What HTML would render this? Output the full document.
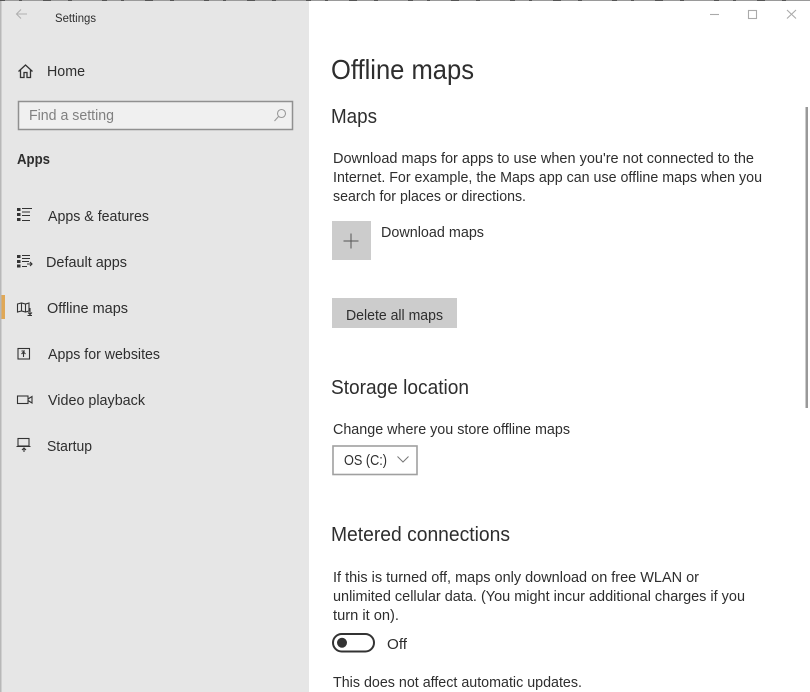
<!DOCTYPE html>
<html lang="en">
<head>
<meta charset="utf-8">
<title>Settings - Offline maps</title>
<style>
html,body{margin:0;padding:0;width:810px;height:692px;overflow:hidden;background:#fff}
svg{display:block;filter:blur(0.35px)}
text{font-family:"Liberation Sans",sans-serif;fill:#2e2e2e}
.i{fill:none;stroke:#333;stroke-width:1.1}
</style>
</head>
<body>
<svg width="810" height="692" viewBox="0 0 810 692" xmlns="http://www.w3.org/2000/svg">
<rect width="810" height="692" fill="#fff"/>
<rect width="309" height="692" fill="#e6e6e6"/>
<rect x="0" y="0" width="1.500" height="692" fill="#b8b8b8"/>
<rect x="0" y="0" width="810" height="1" fill="#9a9a9a"/>
<line x1="0" y1="0.500" x2="810" y2="0.500" stroke="#555" stroke-width="1" stroke-dasharray="5 14 3 21 8 17 4 30"/>

<!-- title bar -->
<path class="i" d="M27 14H16.500M21 9.500L16.500 14L21 18.500" style="stroke:#b0b0b0"/>
<text x="55" y="22" font-size="11.500" textLength="41" lengthAdjust="spacingAndGlyphs">Settings</text>
<path class="i" d="M710 14.500H719" style="stroke:#aaa"/>
<rect x="748.500" y="10.500" width="8" height="8" class="i" style="stroke:#aaa"/>
<path class="i" d="M787 10L796 18.500M796 10L787 18.500" style="stroke:#aaa"/>

<!-- home -->
<path class="i" d="M18.500 71.500L25.500 65L32.500 71.500M20.500 70V77.500H24V72.500H27V77.500H30.500V70" style="stroke-width:1.300"/>
<text x="47" y="76" font-size="15" textLength="38" lengthAdjust="spacingAndGlyphs">Home</text>

<!-- search -->
<rect x="18.500" y="101.500" width="274" height="28" fill="#f0f0f0" stroke="#909090" stroke-width="1.500"/>
<text x="29" y="120" font-size="15" style="fill:#808080" textLength="85" lengthAdjust="spacingAndGlyphs">Find a setting</text>
<circle cx="281.500" cy="113.500" r="4" class="i" style="stroke:#999"/>
<path class="i" d="M278.500 116.500L274.500 121" style="stroke:#999"/>

<text x="17" y="164" font-size="15" font-weight="700" textLength="33" lengthAdjust="spacingAndGlyphs">Apps</text>

<!-- Apps & features -->
<path d="M17 208h3.500v3h-3.500zM17 213h3.500v3h-3.500zM17 218h3.500v3h-3.500z" fill="#333"/>
<path class="i" d="M22 208.500H32M22 212H30M22 215.500H30M22 220.500H30"/>
<text x="48" y="221" font-size="15" textLength="101" lengthAdjust="spacingAndGlyphs">Apps &amp; features</text>

<!-- Default apps -->
<path d="M17 255h3.500v3h-3.500zM17 260h3.500v3h-3.500zM17 264.500h3.500v3h-3.500z" fill="#333"/>
<path class="i" d="M22 255.500H30M22 258.500H30M22 261.500H29M22 266.500H27M27 264H32M30 262L32 264L30 266"/>
<text x="46" y="267" font-size="15" textLength="81" lengthAdjust="spacingAndGlyphs">Default apps</text>

<!-- Offline maps -->
<rect x="1.500" y="295" width="3.500" height="24" fill="#e0a857"/>
<path class="i" d="M17.500 304L21.500 303L25.500 304L29 303V311L25.500 312L21.500 311L17.500 312ZM21.500 303V311M25.500 304V312M30 308V314M28 312.500L30 314.500L32 312.500M27.500 315.500H32"/>
<text x="47" y="313" font-size="15" textLength="81" lengthAdjust="spacingAndGlyphs">Offline maps</text>

<!-- Apps for websites -->
<rect x="18" y="348.500" width="11.500" height="10.500" class="i"/>
<path class="i" d="M23.500 357V352M21.500 354L23.500 352L25.500 354M21.500 351H25"/>
<text x="48" y="359" font-size="15" textLength="112" lengthAdjust="spacingAndGlyphs">Apps for websites</text>

<!-- Video playback -->
<rect x="17.500" y="396" width="10.500" height="7.500" class="i"/>
<path class="i" d="M28 399L32 396.500V403L28 400.500"/>
<text x="48" y="405" font-size="15" textLength="97" lengthAdjust="spacingAndGlyphs">Video playback</text>

<!-- Startup -->
<rect x="18" y="438.500" width="11" height="7.500" class="i"/>
<path class="i" d="M16.500 446.500H30.500M24 452V448M22 450L24 448L26 450"/>
<text x="47" y="451" font-size="15" textLength="45" lengthAdjust="spacingAndGlyphs">Startup</text>

<!-- main -->
<text x="331" y="79" font-size="28" textLength="143" lengthAdjust="spacingAndGlyphs">Offline maps</text>
<text x="331" y="123" font-size="20" textLength="46" lengthAdjust="spacingAndGlyphs">Maps</text>

<text x="333" y="163" font-size="15" textLength="421" lengthAdjust="spacingAndGlyphs">Download maps for apps to use when you're not connected to the</text>
<text x="333" y="182" font-size="15" textLength="429" lengthAdjust="spacingAndGlyphs">Internet. For example, the Maps app can use offline maps when you</text>
<text x="333" y="201" font-size="15" textLength="193" lengthAdjust="spacingAndGlyphs">search for places or directions.</text>

<rect x="332" y="221" width="39" height="39" fill="#cccccc"/>
<path d="M351 233.500V248.500M343.500 241H358.500" fill="none" stroke="#555" stroke-width="1"/>
<text x="381" y="237" font-size="15" textLength="103" lengthAdjust="spacingAndGlyphs">Download maps</text>

<rect x="332" y="298" width="125" height="30" fill="#cccccc"/>
<text x="346" y="320" font-size="15" textLength="97" lengthAdjust="spacingAndGlyphs">Delete all maps</text>

<text x="331" y="394" font-size="20" textLength="138" lengthAdjust="spacingAndGlyphs">Storage location</text>
<text x="333" y="434" font-size="15" textLength="237" lengthAdjust="spacingAndGlyphs">Change where you store offline maps</text>

<rect x="333" y="446" width="84" height="28.500" fill="#fff" stroke="#a0a0a0" stroke-width="1.600"/>
<text x="344" y="465" font-size="15" textLength="43" lengthAdjust="spacingAndGlyphs">OS (C:)</text>
<path d="M397.500 456.500L403 462L408.500 456.500" fill="none" stroke="#777" stroke-width="1"/>

<text x="331" y="541" font-size="20" textLength="179" lengthAdjust="spacingAndGlyphs">Metered connections</text>

<text x="333" y="582" font-size="15" textLength="366" lengthAdjust="spacingAndGlyphs">If this is turned off, maps only download on free WLAN or</text>
<text x="333" y="601" font-size="15" textLength="412" lengthAdjust="spacingAndGlyphs">unlimited cellular data. (You might incur additional charges if you</text>
<text x="333" y="620" font-size="15" textLength="66" lengthAdjust="spacingAndGlyphs">turn it on).</text>

<rect x="333" y="634" width="41" height="17.500" rx="8.750" fill="#fff" stroke="#333" stroke-width="2"/>
<circle cx="342" cy="642.750" r="5" fill="#333"/>
<text x="387" y="649" font-size="15" textLength="20" lengthAdjust="spacingAndGlyphs">Off</text>

<text x="333" y="687" font-size="15" textLength="249" lengthAdjust="spacingAndGlyphs">This does not affect automatic updates.</text>

<!-- scrollbar -->
<rect x="805.500" y="107" width="2.500" height="301" fill="#999"/>
</svg>
</body>
</html>
